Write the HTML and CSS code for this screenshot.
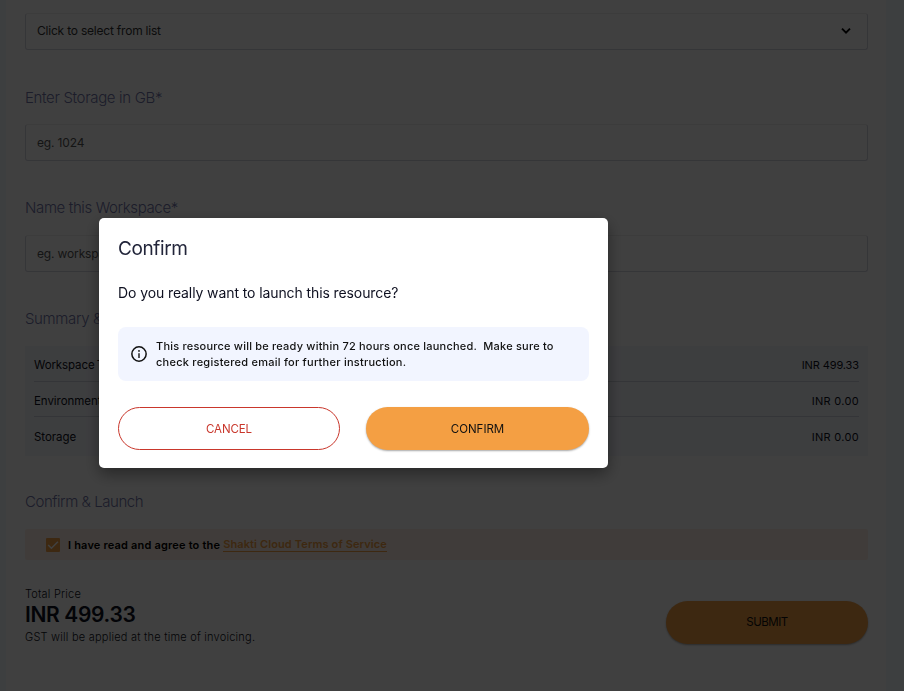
FILE: index.html
```html
<!DOCTYPE html>
<html lang="en">
<head>
<meta charset="utf-8">
<title>Launch workspace</title>
<link rel="stylesheet" href="styles.css">
</head>
<body>
<main class="page">
  <div class="field select"><span class="t-select">Click to select from list</span>
    <svg class="chevron" viewBox="0 0 10 8" width="10" height="8"><path d="M1 1.7 5 5.7 9 1.7" fill="none" stroke="#000" stroke-width="1.9"/></svg>
  </div>
  <h2 class="label label-storage"><span class="t-storage">Enter Storage in GB*</span></h2>
  <div class="field hint"><span class="t-eg">eg. 1024</span></div>
  <h2 class="label"><span class="t-name">Name this Workspace*</span></h2>
  <div class="field hint"><span class="t-eg">eg. workspace</span></div>
  <h2 class="label"><span class="t-name">Summary &amp; Pricing</span></h2>
  <section class="summary">
    <div class="row"><span class="t-type">Workspace Type</span><span class="t-inr-long">INR 499.33</span></div>
    <div class="row"><span class="t-row">Environment</span><span class="t-inr">INR 0.00</span></div>
    <div class="row"><span class="t-row">Storage</span><span class="t-inr">INR 0.00</span></div>
  </section>
  <h2 class="label label-confirm"><span class="t-launch">Confirm &amp; Launch</span></h2>
  <div class="terms">
    <svg class="check" viewBox="0 0 14 14" width="14" height="14"><rect width="14" height="14" rx="1" fill="#f49f43"/><path d="M2.2 7 5.4 10.2 11.9 3.7" fill="none" stroke="#fff" stroke-width="1.5"/></svg>
    <span class="t-agree">I have read and agree to the</span><a class="t-link">Shakti Cloud Terms of Service</a>
  </div>
  <footer class="footer">
    <div class="total">
      <div class="total-label"><span class="t-total">Total Price</span></div>
      <div class="price"><span class="t-price">INR 499.33</span></div>
      <div class="gst"><span class="t-gst">GST will be applied at the time of invoicing.</span></div>
    </div>
    <button class="btn solid submit"><span class="t-submit">SUBMIT</span></button>
  </footer>
</main>
<div class="overlay">
  <div class="dialog">
    <h1 class="title"><span class="t-title">Confirm</span></h1>
    <p class="question"><span class="t-question">Do you really want to launch this resource?</span></p>
    <div class="notice">
      <svg class="info" viewBox="0 0 16 16" width="16" height="16"><circle cx="8" cy="8" r="7.15" fill="none" stroke="#111" stroke-width="1.5"/><path d="M8 7.2V12" stroke="#111" stroke-width="1.4"/><circle cx="8" cy="4.9" r=".9" fill="#111"/></svg>
      <div class="notice-text"><span class="t-n1">This resource will be ready within 72 hours once launched.&nbsp; Make sure to</span><br><span class="t-n2">check registered email for further instruction.</span></div>
    </div>
    <div class="actions">
      <button class="btn outline"><span class="t-cancel">CANCEL</span></button>
      <button class="btn solid"><span class="t-confirm">CONFIRM</span></button>
    </div>
  </div>
</div>
</body>
</html>
```
FILE: styles.css
```css
* { box-sizing: border-box; }
body { margin: 0; height: 691px; overflow: hidden; background: #f4f9ff; font-family: Inter, "Open Sans", sans-serif; color: #0e1020; }
h1, h2, p { margin: 0; font-weight: 400; }
span, a { white-space: nowrap; }
button { font-family: inherit; padding: 0; }

.page { margin: 0 18px 0 6px; height: 691px; padding: 13px 18px 0 19px; background: #fff; }
.field { height: 37px; padding: 0 16px 0 11px; display: flex; align-items: center; justify-content: space-between; border: 1px solid #d4d5e0; border-top-color: #eee; border-radius: 3px; font-size: 12px; }
.select { padding-bottom: 2px; color: #333; }
.hint { color: #555; }
.label { height: 74px; padding-top: 37px; line-height: 20px; font-size: 15px; font-weight: 300; color: #6f73a8; }
.label-storage { padding-top: 38px; }
.summary { height: 110px; padding: 0 9px; background: #f4f7fc; font-size: 11.5px; }
.row { height: 35.5px; padding-top: 4px; display: flex; align-items: center; justify-content: space-between; border-bottom: 1px solid #d0d4de; }
.row:last-child { border-bottom: 0; }
.label-confirm { height: 73px; padding-top: 36px; }
.terms { height: 31px; padding-left: 21px; display: flex; align-items: center; background: #fff0e6; font-size: 11px; font-weight: 600; color: #000; border-radius: 2px; }
.check { margin-right: 8px; }
.t-link { margin: 1px 0 0 3px; color: #f49f43; border-bottom: 1px solid #f49f43; line-height: 13px; }
.footer { display: flex; justify-content: space-between; }
.total { padding-top: 25px; }
.total-label { height: 18px; line-height: 18px; font-size: 11px; font-weight: 300; }
.price { height: 23px; line-height: 23px; font-size: 21px; font-weight: 600; }
.gst { height: 22px; line-height: 23px; font-size: 11px; font-weight: 300; }

.btn { height: 43px; border-radius: 22px; font-size: 11.5px; }
.solid { border: 0; background: #f49f43; color: #111; box-shadow: 0 1px 2px rgba(0, 0, 0, .35); }
.outline { border: 1px solid #c9372c; background: #fff; color: #c9372c; }
.submit { flex: 0 0 202px; margin-top: 40.5px; }

.overlay { position: fixed; inset: 0; background: rgba(0, 0, 0, .75); }
.dialog { width: 509px; height: 250px; margin: 218px 0 0 99px; padding: 18px 19px; background: #fff; border-radius: 5px; box-shadow: 0 6px 16px rgba(0, 0, 0, .4); }
.title { height: 26px; line-height: 26px; font-size: 19px; color: #22253a; }
.question { margin-top: 21px; height: 20px; line-height: 20px; font-size: 14px; }
.notice { margin-top: 24px; height: 54px; padding-left: 13px; display: flex; align-items: center; background: #f2f5ff; border-radius: 8px; }
.notice-text { margin-left: 9px; line-height: 16px; font-size: 11px; font-weight: 500; color: #111; }
.actions { margin-top: 26px; display: grid; grid-template-columns: 222px 223px; gap: 26px; }

/* Tracking */
.t-select { letter-spacing: -.21px; }
.t-eg { letter-spacing: -.15px; }
.t-storage { letter-spacing: -.33px; }
.t-name { letter-spacing: -.37px; }
.t-launch { letter-spacing: -.45px; }
.t-row { letter-spacing: -.05px; }
.t-type { letter-spacing: -.1px; word-spacing: -1px; }
.t-inr-long { font-size: 11px; letter-spacing: -.1px; }
.t-inr { font-size: 11px; letter-spacing: .3px; }
.t-agree { letter-spacing: .18px; }
.t-link { letter-spacing: .12px; }
.t-total { letter-spacing: .2px; }
.t-price { letter-spacing: -.35px; }
.t-gst { letter-spacing: .22px; }
.t-title { letter-spacing: -.4px; }
.t-question { letter-spacing: -.1px; }
.t-n1 { letter-spacing: .21px; }
.t-n2 { letter-spacing: .25px; }
.t-cancel { letter-spacing: -.1px; }
.t-submit { letter-spacing: -.5px; }
```
